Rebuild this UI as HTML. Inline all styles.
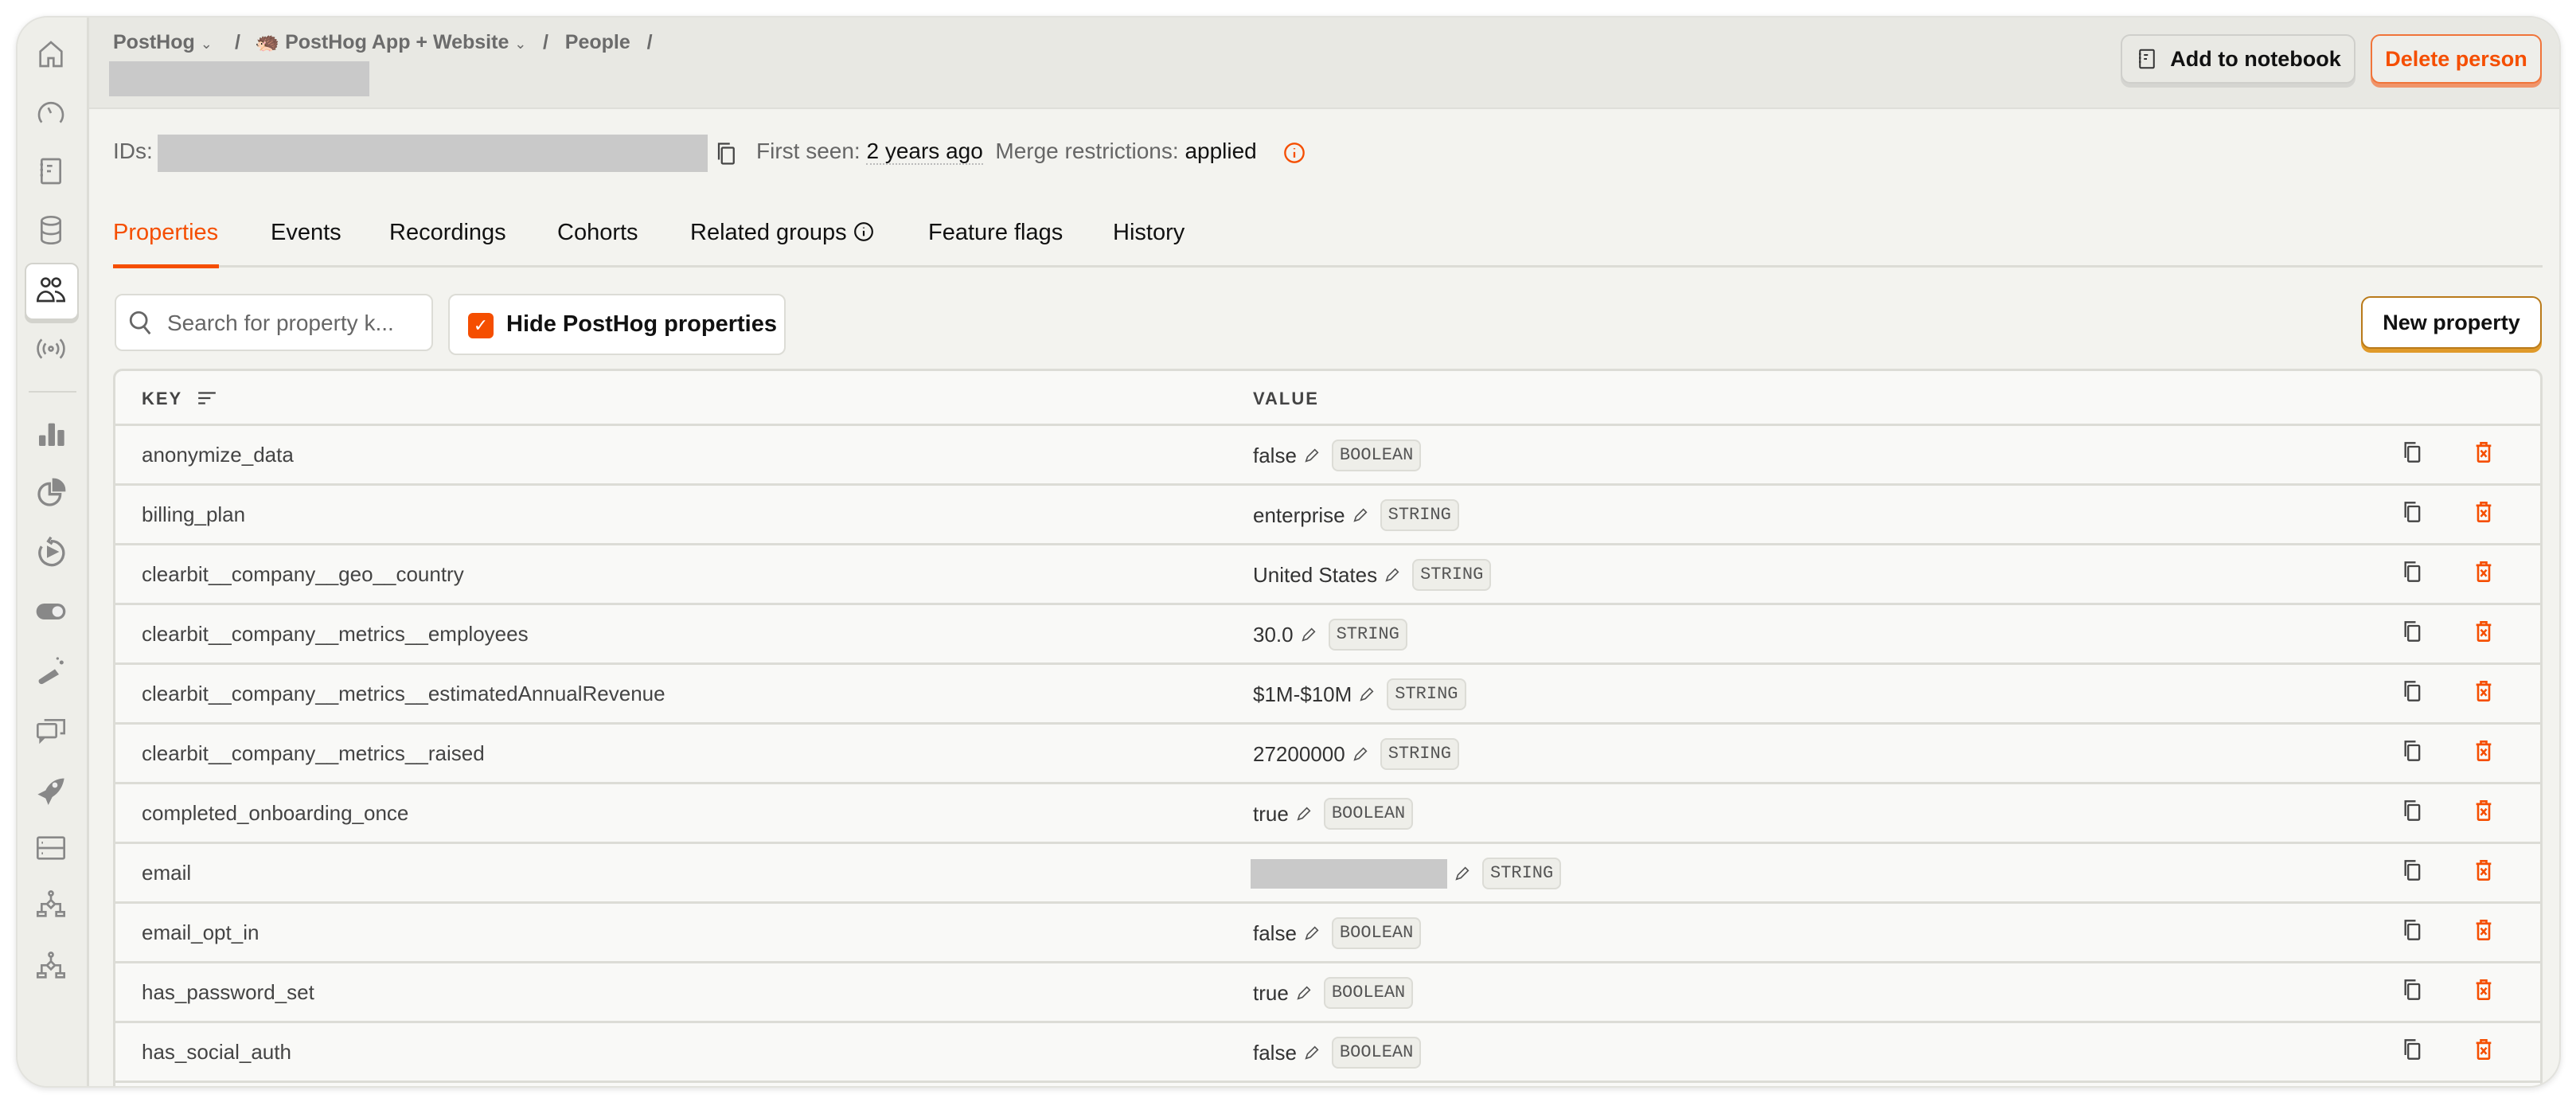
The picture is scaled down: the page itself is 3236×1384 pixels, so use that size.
<!DOCTYPE html>
<html><head><meta charset="utf-8"><style>
*{box-sizing:border-box;margin:0;padding:0}
body{width:3236px;height:1384px;background:#fff;font-family:"Liberation Sans",sans-serif;position:relative;overflow:hidden;color:#111}
.frame{position:absolute;left:20px;top:20px;width:3197px;height:1346px;border-radius:40px;background:#f3f3ef;border:2px solid #e2e2dd;box-shadow:0 2px 8px rgba(0,0,0,.12);overflow:hidden}
.side{position:absolute;left:0;top:0;width:90px;height:100%;background:#eeeee9;border-right:3px solid #ddddd7}
.hdr{position:absolute;left:90px;top:0;right:0;height:115px;background:#e8e8e3;border-bottom:2px solid #dfdfda}
.a{position:absolute}
.ic{position:absolute;left:22px;width:40px;height:40px}
.bc{font-size:25px;font-weight:bold;color:#6b6b6b;top:17px}
.btn{position:absolute;border-radius:12px;font-size:27px;font-weight:bold;display:flex;align-items:center;justify-content:center}
.tab{position:absolute;top:254px;font-size:29px;color:#111}
.row{position:absolute;left:0;right:0;height:75px;border-top:3px solid #dcdcd6}
.k{position:absolute;left:33px;top:21px;font-size:26px;color:#444}
.v{position:absolute;left:1429px;top:21px;font-size:26px;color:#333;display:flex;align-items:center;height:32px}
.bd{display:inline-block;margin-left:14px;border:2px solid #dcdcd6;background:#eeeee9;border-radius:8px;font-family:"Liberation Mono",monospace;font-size:22px;color:#555;padding:5px 8px;line-height:26px}
.pen{margin-left:8px;width:22px;height:22px}
</style></head><body>
<div class="frame">
 <div class="side">
  <svg class="ic" style="top:26px" viewBox="0 0 24 24" fill="none" stroke="#888" stroke-width="1.6"><path d="M4 21V10l8-7 8 7v11h-6v-6h-4v6z"/></svg>
  <svg class="ic" style="top:100px" viewBox="0 0 24 24" fill="none" stroke="#888" stroke-width="1.6"><path d="M5 19a9 9 0 1 1 14 0"/><path d="M10 8l2 4"/></svg>
  <svg class="ic" style="top:173px" viewBox="0 0 24 24" fill="none" stroke="#888" stroke-width="1.6"><rect x="5" y="3" width="14" height="18" rx="1"/><path d="M9 8h4M9 12h3M4 7h2M4 11h2M4 15h2"/></svg>
  <svg class="ic" style="top:247px" viewBox="0 0 24 24" fill="none" stroke="#888" stroke-width="1.6"><ellipse cx="12" cy="5" rx="7" ry="3"/><path d="M5 5v14c0 1.7 3 3 7 3s7-1.3 7-3V5M5 12c0 1.7 3 3 7 3s7-1.3 7-3"/></svg>
  <div class="a" style="left:9px;top:308px;width:68px;height:72px;background:#fff;border:2px solid #d3d3cd;border-radius:10px;box-shadow:0 4px 0 #d3d3cd"></div>
  <svg class="ic" style="top:321px" viewBox="0 0 24 24" fill="none" stroke="#333" stroke-width="1.6"><circle cx="8" cy="7" r="3"/><circle cx="16" cy="7" r="3"/><path d="M2 21c0-4 3-7 6-7s6 3 6 7zM15 14c3 0 7 3 7 7h-6"/></svg>
  <svg class="ic" style="top:396px" viewBox="0 0 24 24" fill="none" stroke="#888" stroke-width="1.6"><circle cx="12" cy="12" r="1.5"/><path d="M8 8a6 6 0 0 0 0 8M16 8a6 6 0 0 1 0 8M5 5a10 10 0 0 0 0 14M19 5a10 10 0 0 1 0 14"/></svg>
  <div class="a" style="left:14px;top:469px;width:60px;height:2px;background:#d6d6d0"></div>
  <svg class="ic" style="top:503px" viewBox="0 0 24 24" fill="#888"><rect x="3" y="13" width="5" height="8" rx="1"/><rect x="10" y="4" width="5" height="17" rx="1"/><rect x="17" y="9" width="5" height="12" rx="1"/></svg>
  <svg class="ic" style="top:577px" viewBox="0 0 24 24" fill="none" stroke="#888" stroke-width="2"><path d="M11 5a8 8 0 1 0 8 8h-8z"/><path d="M14 2a8 8 0 0 1 8 8h-8z" fill="#888"/></svg>
  <svg class="ic" style="top:651px" viewBox="0 0 24 24" fill="none" stroke="#888" stroke-width="2"><path d="M5 8a9 9 0 1 0 7-4"/><path d="M12 1l-2 3 3 2"/><path d="M10 9l6 3-6 3z" fill="#888"/></svg>
  <svg class="ic" style="top:726px" viewBox="0 0 24 24"><rect x="1" y="6" width="22" height="12" rx="6" fill="#888"/><circle cx="17" cy="12" r="4" fill="#eee"/></svg>
  <svg class="ic" style="top:800px" viewBox="0 0 24 24" fill="#888"><path d="M3 19l12-8 3 4-12 7c-2 1-4-1-3-3z"/><circle cx="20" cy="6" r="1.5"/><circle cx="17" cy="3" r="1"/></svg>
  <svg class="ic" style="top:874px" viewBox="0 0 24 24" fill="none" stroke="#888" stroke-width="1.6"><rect x="2" y="8" width="14" height="10" rx="1"/><path d="M7 5h15v10h-3M4 18v3l3-3"/></svg>
  <svg class="ic" style="top:949px" viewBox="0 0 24 24" fill="#888"><path d="M2 16l6-3c3-6 8-9 14-9-1 6-4 11-9 14l-3 6-2-5z"/><circle cx="15" cy="9" r="2" fill="#eee"/></svg>
  <svg class="ic" style="top:1023px" viewBox="0 0 24 24" fill="none" stroke="#888" stroke-width="1.6"><rect x="2" y="4" width="20" height="16" rx="1"/><path d="M2 12h20M5 8h1M5 16h1"/></svg>
  <svg class="ic" style="top:1095px" viewBox="0 0 24 24" fill="none" stroke="#888" stroke-width="1.6"><circle cx="12" cy="3" r="1.5"/><path d="M12 5v3l-3 3 3 3 3-3-3-3M9 11H5v6M15 11h4v6"/><rect x="2" y="17" width="6" height="3"/><rect x="16" y="17" width="6" height="3"/></svg>
  <svg class="ic" style="top:1172px" viewBox="0 0 24 24" fill="none" stroke="#888" stroke-width="1.6"><circle cx="12" cy="3" r="1.5"/><path d="M12 5v3l-3 3 3 3 3-3-3-3M9 11H5v6M15 11h4v6"/><rect x="2" y="17" width="6" height="3"/><rect x="16" y="17" width="6" height="3"/></svg>
 </div>
 <div class="hdr">
  <div class="a bc" style="left:30px">PostHog <span style="font-size:18px;font-weight:normal">&#8964;</span></div>
  <div class="a bc" style="left:183px">/</div>
  <div class="a bc" style="left:208px">🦔 PostHog App + Website <span style="font-size:18px;font-weight:normal">&#8964;</span></div>
  <div class="a bc" style="left:570px">/&nbsp;&nbsp; People &nbsp;&nbsp;/</div>
  <div class="a" style="left:25px;top:55px;width:327px;height:44px;background:#c9c9c9"></div>
 </div>
 <div class="btn" style="left:2642px;top:21px;width:295px;height:62px;background:#e9e9e4;border:2px solid #cfcfcb;box-shadow:0 5px 0 #d5d5d1;color:#111"><svg width="30" height="34" viewBox="0 0 24 24" fill="none" stroke="#333" stroke-width="1.6" style="margin-right:14px"><rect x="5" y="3" width="14" height="18" rx="1"/><path d="M9 8h4M9 12h3M4 7h2M4 11h2M4 15h2"/></svg>Add to notebook</div>
 <div class="btn" style="left:2956px;top:21px;width:215px;height:62px;background:#eeeeea;border:2px solid #f0743a;box-shadow:0 5px 0 #f0946a;color:#f54e00">Delete person</div>

 <div class="a" style="left:120px;top:152px;font-size:28px;color:#666">IDs:</div>
 <div class="a" style="left:176px;top:147px;width:691px;height:47px;background:#c9c9c9"></div>
 <svg class="a" style="left:876px;top:153px" width="30" height="36" viewBox="0 0 24 24" fill="none" stroke="#444" stroke-width="1.8"><rect x="7" y="6" width="12" height="16" rx="1"/><path d="M4 18V2h11"/></svg>
 <div class="a" style="left:928px;top:152px;font-size:28px;color:#666">First seen: <span style="color:#111;border-bottom:2px dotted #bbb">2 years ago</span>&nbsp; Merge restrictions: <span style="color:#111">applied</span></div>
 <svg class="a" style="left:1590px;top:156px" width="28" height="28" viewBox="0 0 24 24" fill="none" stroke="#f54e00" stroke-width="2"><circle cx="12" cy="12" r="10"/><path d="M12 11v6M12 7v1"/></svg>

 <div class="tab" style="left:120px;color:#f54e00">Properties</div>
 <div class="tab" style="left:318px">Events</div>
 <div class="tab" style="left:467px">Recordings</div>
 <div class="tab" style="left:678px">Cohorts</div>
 <div class="tab" style="left:845px">Related groups <svg width="26" height="26" viewBox="0 0 24 24" fill="none" stroke="#111" stroke-width="2" style="vertical-align:-3px"><circle cx="12" cy="12" r="10"/><path d="M12 11v6M12 7v1"/></svg></div>
 <div class="tab" style="left:1144px">Feature flags</div>
 <div class="tab" style="left:1376px">History</div>
 <div class="a" style="left:120px;top:311px;width:3052px;height:3px;background:#dcdcd6"></div>
 <div class="a" style="left:120px;top:310px;width:133px;height:5px;background:#f54e00"></div>

 <div class="a" style="left:122px;top:347px;width:400px;height:72px;background:#fff;border:2px solid #dcdcd6;border-radius:10px"></div>
 <svg class="a" style="left:138px;top:365px" width="34" height="36" viewBox="0 0 24 24" fill="none" stroke="#666" stroke-width="2"><circle cx="10" cy="10" r="7"/><path d="M15 16l5 6"/></svg>
 <div class="a" style="left:188px;top:368px;font-size:28px;color:#666">Search for property k...</div>
 <div class="a" style="left:541px;top:347px;width:424px;height:77px;background:#fff;border:2px solid #dcdcd6;border-radius:10px"></div>
 <div class="a" style="left:566px;top:371px;width:32px;height:32px;background:#f54e00;border-radius:6px;color:#fff;font-size:22px;text-align:center;line-height:32px">✓</div>
 <div class="a" style="left:614px;top:369px;font-size:29px;font-weight:bold;color:#111">Hide PostHog properties</div>
 <div class="btn" style="left:2944px;top:350px;width:227px;height:66px;background:#fff;border:2px solid #b97a1a;box-shadow:0 5px 0 #e09a2a;color:#111">New property</div>

 <div class="a" style="left:120px;top:441px;width:3052px;height:930px;background:#f9f9f7;border:3px solid #dcdcd6;border-radius:12px">
  <div class="a" style="left:33px;top:22px;font-size:22px;font-weight:bold;letter-spacing:2px;color:#444">KEY <svg width="26" height="20" viewBox="0 0 24 18" stroke="#444" stroke-width="2" style="margin-left:10px;vertical-align:-2px"><path d="M2 3h20M2 9h14M2 15h8"/></svg></div>
  <div class="a" style="left:1429px;top:22px;font-size:22px;font-weight:bold;letter-spacing:2px;color:#444">VALUE</div>
  <div class="row" style="top:66px"><div class="k">anonymize_data</div><div class="v">false<svg class="pen" viewBox="0 0 24 24" fill="none" stroke="#555" stroke-width="1.8"><path d="M4 20l2-6L16 4l4 4-10 10z"/></svg><span class="bd">BOOLEAN</span></div></div>
  <div class="row" style="top:141px"><div class="k">billing_plan</div><div class="v">enterprise<svg class="pen" viewBox="0 0 24 24" fill="none" stroke="#555" stroke-width="1.8"><path d="M4 20l2-6L16 4l4 4-10 10z"/></svg><span class="bd">STRING</span></div></div>
  <div class="row" style="top:216px"><div class="k">clearbit__company__geo__country</div><div class="v">United States<svg class="pen" viewBox="0 0 24 24" fill="none" stroke="#555" stroke-width="1.8"><path d="M4 20l2-6L16 4l4 4-10 10z"/></svg><span class="bd">STRING</span></div></div>
  <div class="row" style="top:291px"><div class="k">clearbit__company__metrics__employees</div><div class="v">30.0<svg class="pen" viewBox="0 0 24 24" fill="none" stroke="#555" stroke-width="1.8"><path d="M4 20l2-6L16 4l4 4-10 10z"/></svg><span class="bd">STRING</span></div></div>
  <div class="row" style="top:366px"><div class="k">clearbit__company__metrics__estimatedAnnualRevenue</div><div class="v">$1M-$10M<svg class="pen" viewBox="0 0 24 24" fill="none" stroke="#555" stroke-width="1.8"><path d="M4 20l2-6L16 4l4 4-10 10z"/></svg><span class="bd">STRING</span></div></div>
  <div class="row" style="top:441px"><div class="k">clearbit__company__metrics__raised</div><div class="v">27200000<svg class="pen" viewBox="0 0 24 24" fill="none" stroke="#555" stroke-width="1.8"><path d="M4 20l2-6L16 4l4 4-10 10z"/></svg><span class="bd">STRING</span></div></div>
  <div class="row" style="top:516px"><div class="k">completed_onboarding_once</div><div class="v">true<svg class="pen" viewBox="0 0 24 24" fill="none" stroke="#555" stroke-width="1.8"><path d="M4 20l2-6L16 4l4 4-10 10z"/></svg><span class="bd">BOOLEAN</span></div></div>
  <div class="row" style="top:591px"><div class="k">email</div><div class="v" style="left:1426px"><span style="display:inline-block;width:247px;height:37px;background:#c9c9c9"></span><svg class="pen" viewBox="0 0 24 24" fill="none" stroke="#555" stroke-width="1.8"><path d="M4 20l2-6L16 4l4 4-10 10z"/></svg><span class="bd">STRING</span></div></div>
  <div class="row" style="top:666px"><div class="k">email_opt_in</div><div class="v">false<svg class="pen" viewBox="0 0 24 24" fill="none" stroke="#555" stroke-width="1.8"><path d="M4 20l2-6L16 4l4 4-10 10z"/></svg><span class="bd">BOOLEAN</span></div></div>
  <div class="row" style="top:741px"><div class="k">has_password_set</div><div class="v">true<svg class="pen" viewBox="0 0 24 24" fill="none" stroke="#555" stroke-width="1.8"><path d="M4 20l2-6L16 4l4 4-10 10z"/></svg><span class="bd">BOOLEAN</span></div></div>
  <div class="row" style="top:816px"><div class="k">has_social_auth</div><div class="v">false<svg class="pen" viewBox="0 0 24 24" fill="none" stroke="#555" stroke-width="1.8"><path d="M4 20l2-6L16 4l4 4-10 10z"/></svg><span class="bd">BOOLEAN</span></div></div>
  <div class="row" style="top:891px"></div>
 </div>
</div>
<svg width="0" height="0" style="position:absolute"><defs>
<g id="cpy"><rect x="7" y="6" width="12" height="16" rx="1" fill="none" stroke="#444" stroke-width="2"/><path d="M4 18V2h11" fill="none" stroke="#444" stroke-width="2"/></g>
<g id="trs" fill="none" stroke="#f54e00" stroke-width="2.2"><path d="M4 5h16M9 5V2h6v3"/><rect x="6" y="5" width="12" height="17" rx="1"/><path d="M9 10l6 7M15 10l-6 7"/></g>
</defs></svg>
<div id="ics"></div>
<script>
var h='';for(var i=0;i<11;i++){var y=552+i*75;h+='<svg style="position:absolute;left:3017px;top:'+y+'px" width="28" height="32" viewBox="0 0 24 24"><use href="#cpy"/></svg><svg style="position:absolute;left:3106px;top:'+y+'px" width="28" height="32" viewBox="0 0 24 24"><use href="#trs"/></svg>';}
document.getElementById('ics').innerHTML=h;
</script>
</body></html>
